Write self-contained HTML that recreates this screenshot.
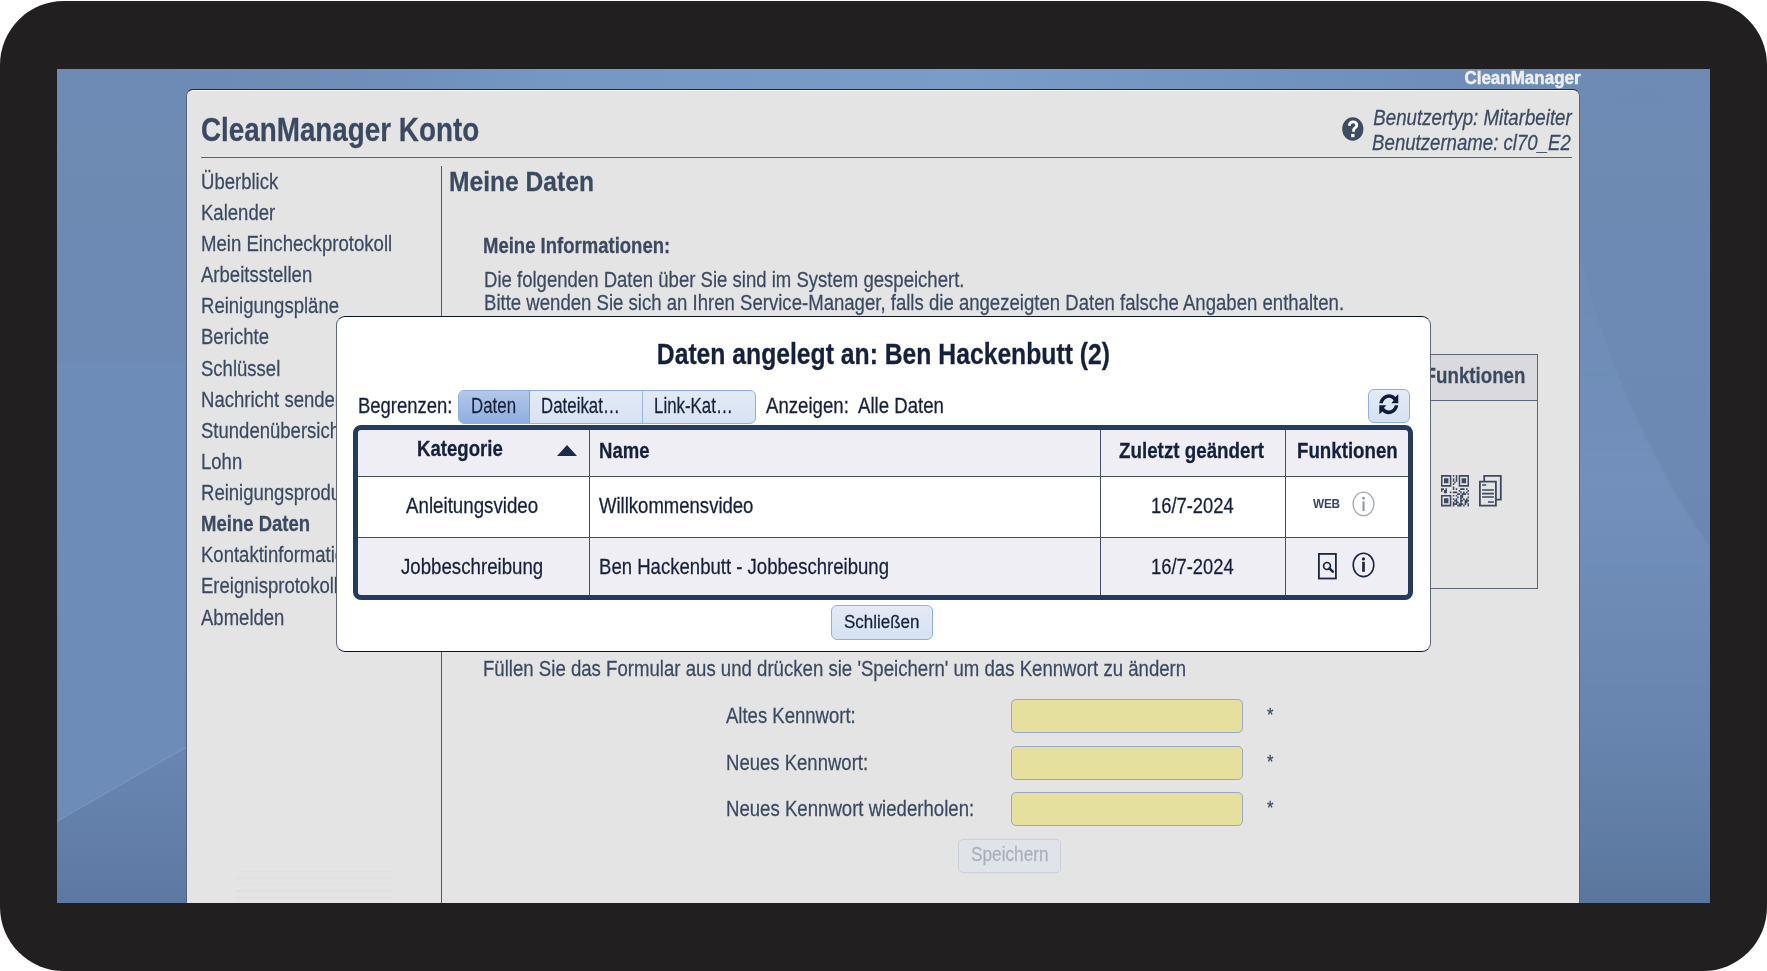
<!DOCTYPE html>
<html><head><meta charset="utf-8">
<style>
html,body{margin:0;padding:0;}
body{width:1767px;height:971px;overflow:hidden;background:#fff;position:relative;font-family:"Liberation Sans",sans-serif;}
.a{position:absolute;box-sizing:border-box;}
.t{position:absolute;line-height:1;white-space:nowrap;text-shadow:0 0 1px rgba(255,255,255,.6);-webkit-text-stroke:0.25px currentColor;}
#bezel{left:0;top:1px;width:1767px;height:970px;border-radius:64px;background:#211f20;}
#screen{left:57px;top:69px;width:1653px;height:834px;overflow:hidden;background:#6886b1;}
#panel{left:186px;top:89px;width:1394px;height:814px;background:#e4e4e4;border:1px solid #56657b;border-top-color:#1f2a3c;border-radius:7px 7px 0 0;box-shadow:inset 0 1px 0 #fafafa;border-bottom:0;}
.hl{background:#55637a;height:1px;}
.vl{background:#4d596d;width:1px;}
#modal{left:336px;top:316px;width:1095px;height:336px;background:#fff;border-radius:9px;border:1.5px solid #5d6779;border-top-color:#0b1126;border-bottom-color:#0b1126;}
#tbl{left:353px;top:425px;width:1060px;height:175px;border:5px solid #253b5d;border-radius:8px;overflow:hidden;background:#efeef5;}
.btn{border:1.2px solid #92b0de;border-radius:6px;background:linear-gradient(#e3eaf5,#d6e2f2);}
.inp{width:232px;height:34px;background:#e5e09d;border:1.2px solid #9aa8c6;border-radius:5px;}
</style></head><body>
<div id="bezel" class="a"></div>
<div id="screen" class="a"></div>
<svg class="a" style="left:57px;top:69px" width="1653" height="834" viewBox="0 0 1653 834">
 <defs>
  <linearGradient id="gb" x1="0" y1="0" x2="0" y2="1">
   <stop offset="0" stop-color="#6e8bb4"/><stop offset=".5" stop-color="#6b89b3"/><stop offset="1" stop-color="#5a769d"/>
  </linearGradient>
  <linearGradient id="gt" x1="0" y1="0" x2="1" y2="0">
   <stop offset="0" stop-color="#6886b1" stop-opacity="0"/><stop offset=".3" stop-color="#7699c5" stop-opacity=".9"/><stop offset=".55" stop-color="#7a9cc8"/><stop offset=".8" stop-color="#7192be" stop-opacity=".8"/><stop offset="1" stop-color="#6886b1" stop-opacity="0"/>
  </linearGradient>
  <linearGradient id="gr" x1="0" y1="0" x2="0" y2="1">
   <stop offset="0" stop-color="#6f8db8" stop-opacity=".6"/><stop offset=".35" stop-color="#7290bb"/><stop offset=".7" stop-color="#6c8ab5" stop-opacity=".6"/><stop offset="1" stop-color="#6c8ab5" stop-opacity="0"/>
  </linearGradient>
  <linearGradient id="gl" x1="0" y1="0" x2="0" y2="1"><stop offset="0" stop-color="#6986b2"/><stop offset="1" stop-color="#5d79a3"/></linearGradient>
  <filter id="bl"><feGaussianBlur stdDeviation="1.2"/></filter>
 </defs>
 <rect width="1653" height="834" fill="url(#gb)"/>
 <rect width="1653" height="40" fill="url(#gt)"/>
 <path d="M0 292H129V678L0 752Z" fill="#6e8cb8" filter="url(#bl)"/>
 <path d="M0 752L129 678V834H0Z" fill="url(#gl)"/>
 <path d="M0 752L129 678" stroke="#7b99c3" stroke-width="1.5" fill="none" opacity=".8"/>
 <path d="M1522 185Q1566 355 1653 478V834H1522Z" fill="url(#gr)" filter="url(#bl)"/>
</svg>
<div id="panel" class="a"></div>
<!-- header line -->
<div class="a hl" style="left:201px;top:157px;width:1371px;"></div>
<!-- help icon -->
<svg class="a" style="left:1342px;top:117px" width="22" height="25" viewBox="0 0 22 25">
 <ellipse cx="10.8" cy="12" rx="10.6" ry="11.8" fill="#3e4c62"/>
 <path d="M7.4 8.8C7.3 6.2 9 4.8 11 4.8C13.2 4.8 14.8 6.2 14.8 8.2C14.8 10.6 12.2 10.9 11.6 12.8V14.8" fill="none" stroke="#fff" stroke-width="2.8"/>
 <rect x="9.2" y="16.9" width="3.3" height="3.3" fill="#fff"/>
</svg>
<!-- faint lines -->
<div class="a" style="left:236px;top:870.5px;width:155px;height:1.5px;background:#e0e0e0;"></div><div class="a" style="left:236px;top:877px;width:155px;height:1.5px;background:#e0e0e0;"></div><div class="a" style="left:236px;top:883.7px;width:155px;height:1.5px;background:#e0e0e0;"></div><div class="a" style="left:236px;top:890.3px;width:155px;height:1.5px;background:#e0e0e0;"></div><div class="a" style="left:236px;top:897px;width:155px;height:1.5px;background:#e0e0e0;"></div>
<!-- vertical separator -->
<div class="a vl" style="left:441px;top:166px;height:737px;"></div>
<!-- background table (right part visible) -->
<div class="a" style="left:1200px;top:354px;width:338px;height:235px;border:1px solid #5c6678;background:#e4e4e4;"></div>
<div class="a" style="left:1201px;top:355px;width:336px;height:46.3px;background:#dadade;border-bottom:1px solid #5c6678;"></div>
<!-- QR icon -->
<svg class="a" style="left:1440.8px;top:475px" width="28" height="31.5" viewBox="0 0 28 31.5"><path fill="#3b4a60" d="M0.00 0.00h1.52v1.71h-1.52zM1.47 0.00h1.52v1.71h-1.52zM2.95 0.00h1.52v1.71h-1.52zM4.42 0.00h1.52v1.71h-1.52zM5.89 0.00h1.52v1.71h-1.52zM7.37 0.00h1.52v1.71h-1.52zM8.84 0.00h1.52v1.71h-1.52zM11.79 0.00h1.52v1.71h-1.52zM14.74 0.00h1.52v1.71h-1.52zM17.68 0.00h1.52v1.71h-1.52zM19.16 0.00h1.52v1.71h-1.52zM20.63 0.00h1.52v1.71h-1.52zM22.11 0.00h1.52v1.71h-1.52zM23.58 0.00h1.52v1.71h-1.52zM25.05 0.00h1.52v1.71h-1.52zM26.53 0.00h1.52v1.71h-1.52zM0.00 1.66h1.52v1.71h-1.52zM8.84 1.66h1.52v1.71h-1.52zM14.74 1.66h1.52v1.71h-1.52zM17.68 1.66h1.52v1.71h-1.52zM26.53 1.66h1.52v1.71h-1.52zM0.00 3.32h1.52v1.71h-1.52zM2.95 3.32h1.52v1.71h-1.52zM4.42 3.32h1.52v1.71h-1.52zM5.89 3.32h1.52v1.71h-1.52zM8.84 3.32h1.52v1.71h-1.52zM11.79 3.32h1.52v1.71h-1.52zM14.74 3.32h1.52v1.71h-1.52zM17.68 3.32h1.52v1.71h-1.52zM20.63 3.32h1.52v1.71h-1.52zM22.11 3.32h1.52v1.71h-1.52zM23.58 3.32h1.52v1.71h-1.52zM26.53 3.32h1.52v1.71h-1.52zM0.00 4.97h1.52v1.71h-1.52zM2.95 4.97h1.52v1.71h-1.52zM4.42 4.97h1.52v1.71h-1.52zM5.89 4.97h1.52v1.71h-1.52zM8.84 4.97h1.52v1.71h-1.52zM11.79 4.97h1.52v1.71h-1.52zM14.74 4.97h1.52v1.71h-1.52zM17.68 4.97h1.52v1.71h-1.52zM20.63 4.97h1.52v1.71h-1.52zM22.11 4.97h1.52v1.71h-1.52zM23.58 4.97h1.52v1.71h-1.52zM26.53 4.97h1.52v1.71h-1.52zM0.00 6.63h1.52v1.71h-1.52zM2.95 6.63h1.52v1.71h-1.52zM4.42 6.63h1.52v1.71h-1.52zM5.89 6.63h1.52v1.71h-1.52zM8.84 6.63h1.52v1.71h-1.52zM13.26 6.63h1.52v1.71h-1.52zM17.68 6.63h1.52v1.71h-1.52zM20.63 6.63h1.52v1.71h-1.52zM22.11 6.63h1.52v1.71h-1.52zM23.58 6.63h1.52v1.71h-1.52zM26.53 6.63h1.52v1.71h-1.52zM0.00 8.29h1.52v1.71h-1.52zM8.84 8.29h1.52v1.71h-1.52zM11.79 8.29h1.52v1.71h-1.52zM17.68 8.29h1.52v1.71h-1.52zM26.53 8.29h1.52v1.71h-1.52zM0.00 9.95h1.52v1.71h-1.52zM1.47 9.95h1.52v1.71h-1.52zM2.95 9.95h1.52v1.71h-1.52zM4.42 9.95h1.52v1.71h-1.52zM5.89 9.95h1.52v1.71h-1.52zM7.37 9.95h1.52v1.71h-1.52zM8.84 9.95h1.52v1.71h-1.52zM17.68 9.95h1.52v1.71h-1.52zM19.16 9.95h1.52v1.71h-1.52zM20.63 9.95h1.52v1.71h-1.52zM22.11 9.95h1.52v1.71h-1.52zM23.58 9.95h1.52v1.71h-1.52zM25.05 9.95h1.52v1.71h-1.52zM26.53 9.95h1.52v1.71h-1.52zM11.79 11.61h1.52v1.71h-1.52zM0.00 13.26h1.52v1.71h-1.52zM1.47 13.26h1.52v1.71h-1.52zM4.42 13.26h1.52v1.71h-1.52zM11.79 13.26h1.52v1.71h-1.52zM14.74 13.26h1.52v1.71h-1.52zM19.16 13.26h1.52v1.71h-1.52zM20.63 13.26h1.52v1.71h-1.52zM22.11 13.26h1.52v1.71h-1.52zM25.05 13.26h1.52v1.71h-1.52zM0.00 14.92h1.52v1.71h-1.52zM2.95 14.92h1.52v1.71h-1.52zM4.42 14.92h1.52v1.71h-1.52zM17.68 14.92h1.52v1.71h-1.52zM26.53 14.92h1.52v1.71h-1.52zM2.95 16.58h1.52v1.71h-1.52zM4.42 16.58h1.52v1.71h-1.52zM8.84 16.58h1.52v1.71h-1.52zM11.79 16.58h1.52v1.71h-1.52zM13.26 16.58h1.52v1.71h-1.52zM14.74 16.58h1.52v1.71h-1.52zM19.16 16.58h1.52v1.71h-1.52zM22.11 16.58h1.52v1.71h-1.52zM25.05 16.58h1.52v1.71h-1.52zM16.21 18.24h1.52v1.71h-1.52zM17.68 18.24h1.52v1.71h-1.52zM20.63 18.24h1.52v1.71h-1.52zM22.11 18.24h1.52v1.71h-1.52zM23.58 18.24h1.52v1.71h-1.52zM26.53 18.24h1.52v1.71h-1.52zM0.00 19.89h1.52v1.71h-1.52zM1.47 19.89h1.52v1.71h-1.52zM2.95 19.89h1.52v1.71h-1.52zM4.42 19.89h1.52v1.71h-1.52zM5.89 19.89h1.52v1.71h-1.52zM7.37 19.89h1.52v1.71h-1.52zM8.84 19.89h1.52v1.71h-1.52zM11.79 19.89h1.52v1.71h-1.52zM14.74 19.89h1.52v1.71h-1.52zM19.16 19.89h1.52v1.71h-1.52zM20.63 19.89h1.52v1.71h-1.52zM0.00 21.55h1.52v1.71h-1.52zM8.84 21.55h1.52v1.71h-1.52zM16.21 21.55h1.52v1.71h-1.52zM19.16 21.55h1.52v1.71h-1.52zM20.63 21.55h1.52v1.71h-1.52zM26.53 21.55h1.52v1.71h-1.52zM0.00 23.21h1.52v1.71h-1.52zM2.95 23.21h1.52v1.71h-1.52zM4.42 23.21h1.52v1.71h-1.52zM5.89 23.21h1.52v1.71h-1.52zM8.84 23.21h1.52v1.71h-1.52zM11.79 23.21h1.52v1.71h-1.52zM14.74 23.21h1.52v1.71h-1.52zM19.16 23.21h1.52v1.71h-1.52zM22.11 23.21h1.52v1.71h-1.52zM25.05 23.21h1.52v1.71h-1.52zM0.00 24.87h1.52v1.71h-1.52zM2.95 24.87h1.52v1.71h-1.52zM4.42 24.87h1.52v1.71h-1.52zM5.89 24.87h1.52v1.71h-1.52zM8.84 24.87h1.52v1.71h-1.52zM13.26 24.87h1.52v1.71h-1.52zM14.74 24.87h1.52v1.71h-1.52zM19.16 24.87h1.52v1.71h-1.52zM20.63 24.87h1.52v1.71h-1.52zM23.58 24.87h1.52v1.71h-1.52zM25.05 24.87h1.52v1.71h-1.52zM26.53 24.87h1.52v1.71h-1.52zM0.00 26.53h1.52v1.71h-1.52zM2.95 26.53h1.52v1.71h-1.52zM4.42 26.53h1.52v1.71h-1.52zM5.89 26.53h1.52v1.71h-1.52zM8.84 26.53h1.52v1.71h-1.52zM11.79 26.53h1.52v1.71h-1.52zM14.74 26.53h1.52v1.71h-1.52zM16.21 26.53h1.52v1.71h-1.52zM19.16 26.53h1.52v1.71h-1.52zM23.58 26.53h1.52v1.71h-1.52zM25.05 26.53h1.52v1.71h-1.52zM0.00 28.18h1.52v1.71h-1.52zM8.84 28.18h1.52v1.71h-1.52zM11.79 28.18h1.52v1.71h-1.52zM13.26 28.18h1.52v1.71h-1.52zM14.74 28.18h1.52v1.71h-1.52zM17.68 28.18h1.52v1.71h-1.52zM19.16 28.18h1.52v1.71h-1.52zM20.63 28.18h1.52v1.71h-1.52zM23.58 28.18h1.52v1.71h-1.52zM26.53 28.18h1.52v1.71h-1.52zM0.00 29.84h1.52v1.71h-1.52zM1.47 29.84h1.52v1.71h-1.52zM2.95 29.84h1.52v1.71h-1.52zM4.42 29.84h1.52v1.71h-1.52zM5.89 29.84h1.52v1.71h-1.52zM7.37 29.84h1.52v1.71h-1.52zM8.84 29.84h1.52v1.71h-1.52zM11.79 29.84h1.52v1.71h-1.52zM16.21 29.84h1.52v1.71h-1.52zM17.68 29.84h1.52v1.71h-1.52zM19.16 29.84h1.52v1.71h-1.52zM22.11 29.84h1.52v1.71h-1.52zM26.53 29.84h1.52v1.71h-1.52z"/></svg>
<!-- docs icon -->
<svg class="a" style="left:1478px;top:474px" width="25" height="33" viewBox="0 0 25 33">
 <g fill="none" stroke="#3b4a60" stroke-width="1.8">
  <path d="M6.2 7.6V1.9H22.8V25.7H17.9"/>
  <path d="M1.9 7.6H17.9V31.6H1.9Z"/>
 </g>
 <g stroke="#3b4a60" stroke-width="1.7">
  <path d="M4.1 11H8.2M4.1 16H15.9M4.1 19.6H15.9M4.1 23H15.9M10 28H15.9"/>
 </g>
</svg>
<!-- inputs -->
<div class="a inp" style="left:1011px;top:699px;"></div>
<div class="a inp" style="left:1011px;top:745.5px;"></div>
<div class="a inp" style="left:1011px;top:792px;"></div>
<!-- speichern button -->
<div class="a" style="left:958px;top:839px;width:103px;height:34px;border:1.2px solid #c9d0da;border-radius:5px;background:#e0e3e8;"></div>


<div class="t" style="left:1464.40px;top:69.61px;font-size:17px;color:#eeeeee;transform:scale(1.0000,1.13);transform-origin:100% 14.39px;font-weight:bold;">CleanManager</div>
<div class="t" style="left:200.84px;top:116.65px;font-size:29px;color:#3b4a60;transform:scale(0.9590,1.13);transform-origin:0 24.55px;font-weight:bold;">CleanManager Konto</div>
<div class="t" style="left:1369.50px;top:108.62px;font-size:19px;color:#3b4a60;transform:scale(0.9835,1.13);transform-origin:100% 16.08px;font-style:italic;">Benutzertyp: Mitarbeiter</div>
<div class="t" style="left:1368.40px;top:134.22px;font-size:19px;color:#3b4a60;transform:scale(0.9797,1.13);transform-origin:100% 16.08px;font-style:italic;">Benutzername: cl70_E2</div>
<div class="t" style="left:200.83px;top:172.82px;font-size:19px;color:#3b4a60;transform:scale(0.9750,1.13);transform-origin:0 16.08px;">Überblick</div>
<div class="t" style="left:200.83px;top:203.94px;font-size:19px;color:#3b4a60;transform:scale(0.9750,1.13);transform-origin:0 16.08px;">Kalender</div>
<div class="t" style="left:200.82px;top:235.06px;font-size:19px;color:#3b4a60;transform:scale(0.9785,1.13);transform-origin:0 16.08px;">Mein Eincheckprotokoll</div>
<div class="t" style="left:200.83px;top:266.18px;font-size:19px;color:#3b4a60;transform:scale(0.9750,1.13);transform-origin:0 16.08px;">Arbeitsstellen</div>
<div class="t" style="left:200.83px;top:297.30px;font-size:19px;color:#3b4a60;transform:scale(0.9750,1.13);transform-origin:0 16.08px;">Reinigungspläne</div>
<div class="t" style="left:200.83px;top:328.42px;font-size:19px;color:#3b4a60;transform:scale(0.9750,1.13);transform-origin:0 16.08px;">Berichte</div>
<div class="t" style="left:200.83px;top:359.54px;font-size:19px;color:#3b4a60;transform:scale(0.9750,1.13);transform-origin:0 16.08px;">Schlüssel</div>
<div class="t" style="left:200.83px;top:390.66px;font-size:19px;color:#3b4a60;transform:scale(0.9750,1.13);transform-origin:0 16.08px;">Nachricht senden</div>
<div class="t" style="left:200.83px;top:421.78px;font-size:19px;color:#3b4a60;transform:scale(0.9750,1.13);transform-origin:0 16.08px;">Stundenübersicht</div>
<div class="t" style="left:200.83px;top:452.90px;font-size:19px;color:#3b4a60;transform:scale(0.9750,1.13);transform-origin:0 16.08px;">Lohn</div>
<div class="t" style="left:200.83px;top:484.02px;font-size:19px;color:#3b4a60;transform:scale(0.9750,1.13);transform-origin:0 16.08px;">Reinigungsprodukte</div>
<div class="t" style="left:200.83px;top:515.14px;font-size:19px;color:#3b4a60;transform:scale(0.9750,1.13);transform-origin:0 16.08px;font-weight:bold;">Meine Daten</div>
<div class="t" style="left:200.83px;top:546.26px;font-size:19px;color:#3b4a60;transform:scale(0.9750,1.13);transform-origin:0 16.08px;">Kontaktinformation</div>
<div class="t" style="left:200.83px;top:577.38px;font-size:19px;color:#3b4a60;transform:scale(0.9750,1.13);transform-origin:0 16.08px;">Ereignisprotokoll</div>
<div class="t" style="left:200.83px;top:608.50px;font-size:19px;color:#3b4a60;transform:scale(0.9750,1.13);transform-origin:0 16.08px;">Abmelden</div>
<div class="t" style="left:449.02px;top:169.74px;font-size:25px;color:#3b4a60;transform:scale(0.9845,1.13);transform-origin:0 21.16px;font-weight:bold;">Meine Daten</div>
<div class="t" style="left:483.43px;top:236.92px;font-size:19px;color:#3b4a60;transform:scale(0.9742,1.13);transform-origin:0 16.08px;font-weight:bold;">Meine Informationen:</div>
<div class="t" style="left:483.52px;top:271.12px;font-size:19px;color:#3b4a60;transform:scale(0.9763,1.13);transform-origin:0 16.08px;">Die folgenden Daten über Sie sind im System gespeichert.</div>
<div class="t" style="left:483.52px;top:294.02px;font-size:19px;color:#3b4a60;transform:scale(0.9775,1.13);transform-origin:0 16.08px;">Bitte wenden Sie sich an Ihren Service-Manager, falls die angezeigten Daten falsche Angaben enthalten.</div>
<div class="t" style="left:1422.51px;top:367.22px;font-size:19px;color:#3b4a60;transform:scale(0.9843,1.13);transform-origin:100% 16.08px;font-weight:bold;">Funktionen</div>
<div class="t" style="left:483.32px;top:659.52px;font-size:19px;color:#3b4a60;transform:scale(0.9793,1.13);transform-origin:0 16.08px;">Füllen Sie das Formular aus und drücken sie 'Speichern' um das Kennwort zu ändern</div>
<div class="t" style="left:726.23px;top:706.82px;font-size:19px;color:#3b4a60;transform:scale(0.9750,1.13);transform-origin:0 16.08px;">Altes Kennwort:</div>
<div class="t" style="left:726.23px;top:753.72px;font-size:19px;color:#3b4a60;transform:scale(0.9750,1.13);transform-origin:0 16.08px;">Neues Kennwort:</div>
<div class="t" style="left:726.22px;top:800.22px;font-size:19px;color:#3b4a60;transform:scale(0.9790,1.13);transform-origin:0 16.08px;">Neues Kennwort wiederholen:</div>
<div class="t" style="left:1267.03px;top:706.91px;font-size:17px;color:#3b4a60;transform:scale(0.9750,1.13);transform-origin:0 14.39px;">*</div>
<div class="t" style="left:1267.03px;top:753.81px;font-size:17px;color:#3b4a60;transform:scale(0.9750,1.13);transform-origin:0 14.39px;">*</div>
<div class="t" style="left:1267.03px;top:800.31px;font-size:17px;color:#3b4a60;transform:scale(0.9750,1.13);transform-origin:0 14.39px;">*</div>
<div class="t" style="left:970.64px;top:846.26px;font-size:18px;color:#a9afb8;transform:scale(0.9566,1.13);transform-origin:0 15.24px;">Speichern</div>
<!-- modal -->
<div id="modal" class="a"></div>
<!-- button group -->
<div class="a" style="left:458px;top:389.5px;width:297.5px;height:34px;border:1.2px solid #8fafdd;border-radius:6px;background:linear-gradient(#e2eaf6,#d8e3f2);overflow:hidden;">
 <div class="a" style="left:0;top:0;width:71px;height:32px;background:linear-gradient(#b3c8ea,#8eaee0);border-right:1.2px solid #7fa0d4;"></div>
 <div class="a" style="left:183px;top:0;width:1.2px;height:32px;background:#9ab5de;"></div>
</div>
<!-- refresh button -->
<div class="a btn" style="left:1368.4px;top:389.4px;width:41.3px;height:34.1px;"></div>
<svg class="a" style="left:1378.6px;top:393.2px" width="20" height="22" viewBox="0 0 20 22">
 <g fill="#0f1d38">
  <path id="ra" d="M0.3 10.2C1.3 4.8 5.3 1.2 10 1.2C12.6 1.2 14.8 2.3 16.3 3.9L19.3 1.2V10.2H12.3L14.6 7.6C13.5 5.8 11.8 4.8 10 4.8C7.2 4.8 4.6 6.9 3.7 10.2Z"/>
  <path d="M0.3 10.2C1.3 4.8 5.3 1.2 10 1.2C12.6 1.2 14.8 2.3 16.3 3.9L19.3 1.2V10.2H12.3L14.6 7.6C13.5 5.8 11.8 4.8 10 4.8C7.2 4.8 4.6 6.9 3.7 10.2Z" transform="rotate(180 9.8 11.2)"/>
 </g>
</svg>
<!-- table -->
<div id="tbl" class="a">
 <div class="a" style="left:0;top:45.7px;width:1060px;height:61px;background:#fff;"></div>
 <div class="a" style="left:0;top:45.5px;width:1060px;height:1.5px;background:#44506a;"></div>
 <div class="a" style="left:0;top:106.6px;width:1060px;height:1.3px;background:#44506a;"></div>
 <div class="a" style="left:230.8px;top:0;width:1.3px;height:175px;background:#44506a;"></div>
 <div class="a" style="left:741.8px;top:0;width:1.3px;height:175px;background:#44506a;"></div>
 <div class="a" style="left:926.8px;top:0;width:1.3px;height:175px;background:#44506a;"></div>
</div>
<!-- sort triangle -->
<div class="a" style="left:556.7px;top:444.5px;width:0;height:0;border-left:10px solid transparent;border-right:10px solid transparent;border-bottom:11.7px solid #1c2b46;"></div>
<!-- WEB icon -->
<div class="a" style="left:1313px;top:497.5px;font-size:10.5px;line-height:11px;font-weight:bold;color:#3a4660;letter-spacing:-0.2px;transform:scale(1.12,1.15);transform-origin:0 0;">WEB</div>
<!-- info icon row1 -->
<svg class="a" style="left:1352px;top:491px" width="23" height="26" viewBox="0 0 23 26">
 <ellipse cx="11.5" cy="12.9" rx="10.4" ry="11.8" fill="none" stroke="#a3a9b7" stroke-width="1.3"/>
 <circle cx="11.5" cy="7.2" r="1.4" fill="#8d94a4"/>
 <path d="M11.5 10.3V20" stroke="#8d94a4" stroke-width="2"/>
</svg>
<!-- doc search icon row2 -->
<svg class="a" style="left:1317.5px;top:552.5px" width="20" height="27" viewBox="0 0 20 27">
 <rect x="0.9" y="0.9" width="17" height="24.6" fill="none" stroke="#1a2741" stroke-width="1.8"/>
 <circle cx="9" cy="12.9" r="3.4" fill="none" stroke="#1a2741" stroke-width="1.7"/>
 <path d="M11.4 15.3l3.4 3.4" stroke="#1a2741" stroke-width="2.6" stroke-linecap="round"/>
</svg>
<!-- info icon row2 -->
<svg class="a" style="left:1352px;top:551.7px" width="23" height="26" viewBox="0 0 23 26">
 <ellipse cx="11.5" cy="12.9" rx="10.3" ry="11.7" fill="none" stroke="#1a2741" stroke-width="1.6"/>
 <circle cx="11.5" cy="6.9" r="1.6" fill="#1a2741"/>
 <path d="M11.5 9.8V19.8" stroke="#1a2741" stroke-width="2.7"/>
</svg>
<!-- Schliessen button -->
<div class="a btn" style="left:831.3px;top:605.3px;width:102.2px;height:34.3px;"></div>
<div class="t" style="left:645.03px;top:341.99px;font-size:26px;color:#15213b;transform:scale(0.9505,1.13);transform-origin:50% 22.01px;font-weight:bold;">Daten angelegt an: Ben Hackenbutt (2)</div>
<div class="t" style="left:357.93px;top:396.62px;font-size:19px;color:#15213b;transform:scale(0.9720,1.13);transform-origin:0 16.08px;">Begrenzen:</div>
<div class="t" style="left:470.91px;top:396.62px;font-size:19px;color:#15213b;transform:scale(0.8888,1.13);transform-origin:0 16.08px;">Daten</div>
<div class="t" style="left:541.01px;top:396.62px;font-size:19px;color:#15213b;transform:scale(0.8880,1.13);transform-origin:0 16.08px;">Dateikat…</div>
<div class="t" style="left:654.31px;top:396.62px;font-size:19px;color:#15213b;transform:scale(0.8880,1.13);transform-origin:0 16.08px;">Link-Kat…</div>
<div class="t" style="left:765.52px;top:396.62px;font-size:19px;color:#15213b;transform:scale(0.9806,1.13);transform-origin:0 16.08px;">Anzeigen:</div>
<div class="t" style="left:857.62px;top:396.62px;font-size:19px;color:#15213b;transform:scale(0.9795,1.13);transform-origin:0 16.08px;">Alle Daten</div>
<div class="t" style="left:416.82px;top:440.12px;font-size:19px;color:#15213b;transform:scale(0.9799,1.13);transform-origin:0 16.08px;font-weight:bold;">Kategorie</div>
<div class="t" style="left:598.52px;top:441.52px;font-size:19px;color:#15213b;transform:scale(0.9750,1.13);transform-origin:0 16.08px;font-weight:bold;">Name</div>
<div class="t" style="left:1119.41px;top:441.52px;font-size:19px;color:#15213b;transform:scale(0.9888,1.13);transform-origin:0 16.08px;font-weight:bold;">Zuletzt geändert</div>
<div class="t" style="left:1296.82px;top:441.52px;font-size:19px;color:#15213b;transform:scale(0.9843,1.13);transform-origin:0 16.08px;font-weight:bold;">Funktionen</div>
<div class="t" style="left:406.21px;top:497.02px;font-size:19px;color:#15213b;transform:scale(0.9853,1.13);transform-origin:0 16.08px;">Anleitungsvideo</div>
<div class="t" style="left:598.52px;top:497.12px;font-size:19px;color:#15213b;transform:scale(0.9750,1.13);transform-origin:0 16.08px;">Willkommensvideo</div>
<div class="t" style="left:1151.03px;top:497.12px;font-size:19px;color:#15213b;transform:scale(0.9659,1.13);transform-origin:0 16.08px;">16/7-2024</div>
<div class="t" style="left:401.12px;top:557.72px;font-size:19px;color:#15213b;transform:scale(0.9825,1.13);transform-origin:0 16.08px;">Jobbeschreibung</div>
<div class="t" style="left:598.52px;top:557.92px;font-size:19px;color:#15213b;transform:scale(0.9770,1.13);transform-origin:0 16.08px;">Ben Hackenbutt - Jobbeschreibung</div>
<div class="t" style="left:1151.03px;top:557.92px;font-size:19px;color:#15213b;transform:scale(0.9659,1.13);transform-origin:0 16.08px;">16/7-2024</div>
<div class="t" style="left:844.10px;top:613.51px;font-size:17px;color:#15213b;transform:scale(0.9985,1.13);transform-origin:0 14.39px;">Schließen</div>
</body></html>
